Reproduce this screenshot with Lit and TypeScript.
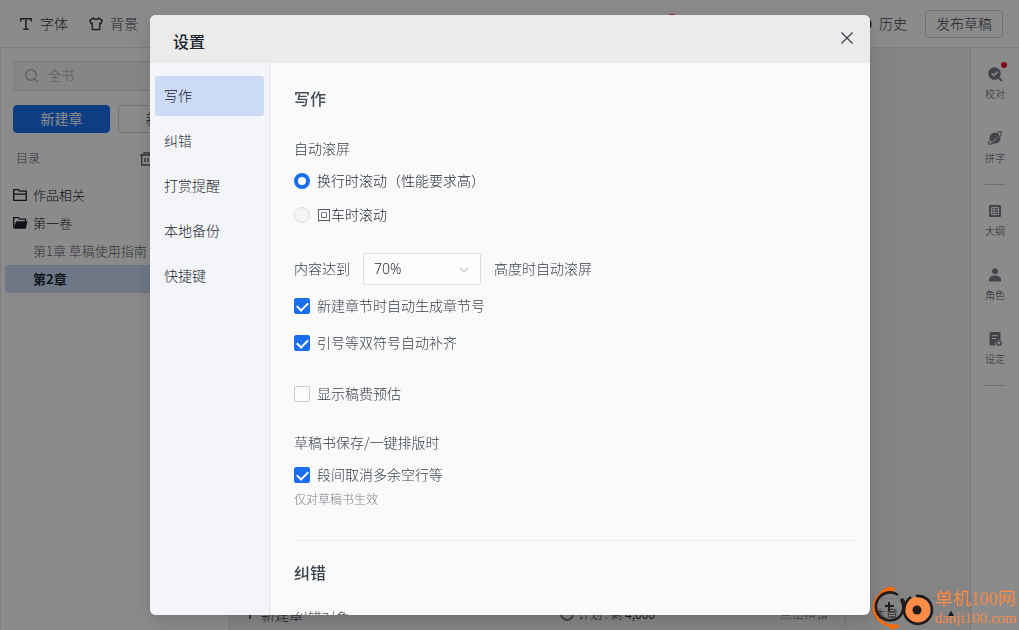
import { LitElement, html, css, svg } from "lit";
import { customElement, state } from "lit/decorators.js";
import { classMap } from "lit/directives/class-map.js";

const base = css`
  * { box-sizing: border-box; }
  :host {
    font-family: "Noto Sans CJK SC", sans-serif;
    font-size: 14px;
    font-weight: 300;
    line-height: 24px;
    color: #1d2530;
  }
  button, input, select { font: inherit; color: inherit; }
  button { border: 0; padding: 0; background: none; cursor: pointer; }
  svg { display: block; flex: none; }
`;

const icons = {
  font: svg`<path d="M1.700 4.500V1.700H12.300V4.500M7 1.700V12.300M4.300 12.300H9.700" fill="none" stroke="currentColor" stroke-width="1.500"/>`,
  shirt: svg`<path d="M4.500 1C5 3 9 3 9.500 1L13.300 3.300 12 6.500 10.800 6V12.500H3.200V6L2 6.500.7 3.300Z" fill="none" stroke="currentColor" stroke-width="1.500" stroke-linejoin="round"/>`,
  clock: svg`<g fill="none" stroke="currentColor" stroke-width="1.500"><circle cx="7" cy="7" r="6"/><path d="M7 3.500V7.500H10"/></g>`,
  search: svg`<g fill="none" stroke="currentColor" stroke-width="1.200"><circle cx="6" cy="6" r="5.300"/><path d="M9.800 9.800 12.500 12.500"/></g>`,
  trash: svg`<path d="M0 3H13M4 3V1H9V3M1.700 3V13H11.300V3M5 6V10M8 6V10" fill="none" stroke="currentColor" stroke-width="1.400"/>`,
  folder: svg`<path d="M.7 1.700H5.500L7 3.200H13.300V12.300H.7ZM.7 6.200H13.300" fill="none" stroke="currentColor" stroke-width="1.300" stroke-linejoin="round"/>`,
  open: svg`<path d="M.7 11V1.700H5.500L7 3.200H12.500V5.500" fill="none" stroke="currentColor" stroke-width="1.300"/><path d="M3.200 5.200H14.500L12.700 12.700H.3Z" fill="currentColor"/>`,
  check: svg`<circle cx="6.500" cy="6.500" r="6.300" fill="currentColor"/><path d="M11 11 14 14" stroke="currentColor" stroke-width="2.200"/><path d="M3.700 6.300 5.900 8.500 9.600 4.700" fill="none" stroke="#fff" stroke-width="1.600"/>`,
  planet: svg`<circle cx="7" cy="7" r="5.500" fill="currentColor"/><path d="M9.500 1.200C12 .2 13.600.3 13.500 1.500 13.200 4.500 9.500 9 5 12 2.500 13.500.6 13.700.5 12.400.5 11.500 1 10.500 1.500 9.800" fill="none" stroke="currentColor" stroke-width="1.200"/><path d="M2.800 11.500C6.500 10 10.500 6.500 12.100 3.300" fill="none" stroke="#fff" stroke-width=".9"/>`,
  outline: svg`<rect x="1" y="1" width="12" height="12" rx="1" fill="currentColor"/><path d="M3.500 3.500H10.500V10.500H3.500ZM3.500 5.800H10.500M3.500 8.200H10.500M6 3.500V10.500" fill="none" stroke="#fff" stroke-width=".9"/>`,
  person: svg`<circle cx="7" cy="3.200" r="2.900" fill="currentColor"/><path d="M1 13.500V12C1 9 3.500 7.500 7 7.500S13 9 13 12V13.500Z" fill="currentColor"/>`,
  config: svg`<path d="M3 0H11.500Q12.500 0 12.500 1V8A4 4 0 0 0 7.500 13.500H3Q1.500 13.500 1.500 12V1.500Q1.500 0 3 0Z" fill="currentColor"/><path d="M4 3.700H10M4 6.500H8" stroke="#fff"/><circle cx="11" cy="11" r="2.200" fill="none" stroke="currentColor" stroke-width="1.500"/>`,
  close: svg`<path d="M1.500 1.500 12.500 12.500M12.500 1.500 1.500 12.500" fill="none" stroke="currentColor" stroke-width="1.400"/>`,
  plus: svg`<path d="M7 2V12M2 7H12" stroke="currentColor" stroke-width="1.500"/>`,
  ring: svg`<circle cx="7" cy="7" r="6" fill="none" stroke="currentColor" stroke-width="2"/>`,
  up: svg`<path d="M4 9 7 3.500 10 9Z" fill="currentColor"/>`,
};

const icon = (name: keyof typeof icons) =>
  html`<svg width="14" height="14" viewBox="0 0 14 14" overflow="visible" aria-hidden="true">${icons[name]}</svg>`;

@customElement("draft-editor")
class DraftEditor extends LitElement {
  static styles = [base, css`
    :host { display: flex; flex-direction: column; min-height: 100vh; background: #f0f0f0; color: #2f343c; }
    .top { display: flex; align-items: center; height: 48px; padding: 0 16px 0 19px; background: #fdfdfd; border-bottom: 1px solid #e2e2e2; }
    .tool { display: flex; align-items: center; gap: 7px; margin-right: 21px; padding-bottom: 2px; color: #3a404a; }
    .tool svg { margin-top: 2px; }
    .middle { flex: 1; display: flex; justify-content: flex-end; padding-right: 186px; }
    .mark { position: relative; width: 14px; height: 14px; }
    .mark::after { content: ""; position: absolute; right: -3px; top: -3px; width: 6px; height: 6px; border-radius: 50%; background: #e8102d; }
    .publish { width: 78px; height: 28px; padding-bottom: 2px; border: 1px solid #cfcfcf; border-radius: 4px; color: #3a404a; }
    .history { margin-right: 18px; }
    .body { flex: 1; display: flex; }
    .side { width: 230px; padding: 13px 5px 0 4px; background: #fdfdfd; border: solid #e5e5e5; border-width: 0 1px; }
    .search { display: flex; align-items: center; gap: 9px; height: 30px; margin: 0 9px; padding: 0 10px; border: 1px solid #dcdede; border-radius: 3px; background: #f3f5f5; color: #a8acae; }
    .search input { width: 100%; min-width: 0; border: 0; padding: 0 0 2px; background: none; font-size: 13px; outline: 0; }
    .search input::placeholder { color: #9a9ea2; }
    .pair { display: flex; gap: 8px; margin: 14px 8px 0; }
    .pair button { width: 97px; height: 28px; padding-bottom: 2px; border: 1px solid #d4d4d4; border-radius: 4px; }
    .pair .main { background: #1a6fee; border-color: #1a6fee; color: #fff; font-weight: 400; }
    .dir { display: flex; align-items: center; justify-content: space-between; height: 24px; margin: 14px 70px 10px 11px; padding-bottom: 2px; font-size: 12px; color: #5c6168; }
    .dir svg { margin-top: 2px; }
    .row { display: flex; align-items: center; gap: 6px; height: 28px; padding: 0 0 0 8px; border-radius: 4px; font-size: 13px; white-space: nowrap; color: #1c222c; }
    .row.chapter { padding-left: 28px; color: #5c6168; }
    .row.current { background: #c8daf6; color: #222933; font-weight: 700; }
    .work { flex: 1; display: flex; flex-direction: column; justify-content: flex-end; }
    .foot { display: flex; align-items: center; height: 32px; padding: 0 12px 2px 13px; border-top: 1px solid #dcdcdc; font-size: 12px; }
    .add, .plan { display: flex; align-items: center; gap: 4px; }
    .add { font-size: 14px; }
    .plan { margin-left: auto; }
    .plan svg { color: #777c84; }
    .fix { margin-left: 125px; color: #6b6f76; }
    .total { margin-left: 17px; padding-left: 28px; border-left: 1px solid #d5d5d5; }
    .foot .last { margin-left: 46px; }
    .rail { width: 49px; padding-top: 10px; background: #fdfdfd; border-left: 1px solid #dadada; }
    .rail button { position: relative; display: flex; flex-direction: column; align-items: center; width: 100%; height: 64px; padding-top: 9px; font-size: 10px; line-height: 16px; gap: 5px; color: #4a5059; }
    .rail svg { color: #787d86; }
    .dot { position: absolute; right: 12px; top: 4px; width: 6px; height: 6px; border-radius: 50%; background: #e8102d; }
    .rail hr { width: 20px; margin: -2px auto 10px; border: 0; border-top: 1px solid #c8c8c8; }
  `];

  render() {
    return html`
      <header class="top">
        <button class="tool">${icon("font")}字体</button>
        <button class="tool">${icon("shirt")}背景</button>
        <div class="middle"><span class="mark"></span></div>
        <button class="tool history">${icon("clock")}历史</button>
        <button class="publish">发布草稿</button>
      </header>
      <div class="body">
        <aside class="side">
          <label class="search">${icon("search")}<input type="search" placeholder="全书" /></label>
          <div class="pair"><button class="main">新建章</button><button>新建卷</button></div>
          <div class="dir"><span>目录</span>${icon("trash")}</div>
          <div class="row">${icon("folder")}作品相关</div>
          <div class="row">${icon("open")}第一卷</div>
          <div class="row chapter">第1章 草稿使用指南</div>
          <div class="row chapter current">第2章</div>
        </aside>
        <main class="work">
          <footer class="foot">
            <button class="add">${icon("plus")}新建章</button>
            <span class="plan">${icon("ring")}<span>计划 : 剩 <b>4,000</b></span></span>
            <span class="fix">点击纠错</span>
            <span class="total">本章</span>
            <span class="last">${icon("up")}</span>
          </footer>
        </main>
        <nav class="rail">
          <button>${icon("check")}校对<i class="dot"></i></button>
          <button>${icon("planet")}拼字</button>
          <hr />
          <button>${icon("outline")}大纲</button>
          <button>${icon("person")}角色</button>
          <button>${icon("config")}设定</button>
          <hr />
        </nav>
      </div>`;
  }
}

@customElement("settings-dialog")
class SettingsDialog extends LitElement {
  static styles = [base, css`
    :host {
      display: flex; flex-direction: column; width: 720px; max-width: 100%; height: 600px; max-height: 100%;
      overflow: hidden; border-radius: 6px; background: #fafafa;
      box-shadow: 0 3px 6px -4px rgba(0,0,0,.12), 0 6px 16px rgba(0,0,0,.08), 0 9px 28px 8px rgba(0,0,0,.05);
    }
    .head { display: flex; flex: none; align-items: center; justify-content: space-between; height: 48px; padding: 4px 16px 0 23px; background: #ebebeb; }
    h2, h3, p { margin: 0; font-size: 16px; font-weight: 500; }
    .close { margin-bottom: 6px; color: #3f4752; }
    .panes { flex: 1; display: flex; min-height: 0; }
    .tabs { flex: none; display: flex; flex-direction: column; gap: 5px; width: 120px; padding: 13px 5px; background: #f4f5f8; border-right: 1px solid #e3e3e5; }
    .tab { height: 40px; padding: 0 0 2px 9px; border-radius: 3px; text-align: left; }
    .tab.on { background: #cbdaf6; }
    .content { flex: 1; overflow: hidden; padding: 23px 11px 0 24px; color: #353d47; }
    h3 { color: #454d57; }
    .title { margin: 26px 0 8px; font-size: 14px; font-weight: 300; }
    .title.save { margin-top: 25px; }
    .opt { display: flex; align-items: center; gap: 7px; }
    .opt input { appearance: none; flex: none; display: grid; place-items: center; width: 16px; height: 16px; margin: 2px 0 0; border: 1px solid #c9cacc; border-radius: 2px; background: #fcfcfc; }
    .opt input:checked { border-color: #1a6fee; background: #1a6fee; }
    .opt input[type="checkbox"]:checked::after { content: ""; width: 9px; height: 5px; margin-bottom: 2px; border: solid #fff; border-width: 0 0 2px 2px; transform: rotate(-45deg); }
    .opt.pick { color: #1d2530; }
    .opt.pick + .pick { margin-top: 10px; }
    .opt input[type="radio"] { border-radius: 50%; border-color: #dcdde0; background: #f4f5f7; }
    .opt input[type="radio"]:checked { border: 4px solid #1a6fee; background: #fff; }
    .limit { display: flex; align-items: center; gap: 13px; margin: 25px 0 8px; }
    .box { position: relative; display: flex; width: 118px; margin-top: 2px; }
    select { appearance: none; width: 100%; height: 32px; padding: 0 10px; border: 1px solid #dcdcde; border-radius: 2px; background: #fcfcfc; color: #262d37; font-family: "Noto Sans", sans-serif; }
    .box svg { position: absolute; right: 12px; top: 14px; color: #a2a5a9; pointer-events: none; }
    .second { margin-top: 13px; }
    .fee { margin-top: 27px; }
    .note { display: block; margin-top: 1px; font-size: 12px; color: #7d8187; }
    hr { margin: 29px 0 19px; border: 0; border-top: 1px solid #eee; }
    h3.next { color: #3a424c; }
    .title.cut { margin-top: 21px; }
  `];

  @state() private active = "写作";

  render() {
    return html`
      <header class="head"><h2>设置</h2><button class="close" aria-label="关闭">${icon("close")}</button></header>
      <div class="panes">
        <nav class="tabs">
          ${["写作", "纠错", "打赏提醒", "本地备份", "快捷键"].map((t) => html`
            <button class=${classMap({ tab: true, on: t === this.active })} @click=${() => (this.active = t)}>${t}</button>`)}
        </nav>
        <section class="content">
          <h3>写作</h3>
          <p class="title">自动滚屏</p>
          <label class="opt pick"><input type="radio" name="scroll" checked />换行时滚动（性能要求高）</label>
          <label class="opt pick"><input type="radio" name="scroll" />回车时滚动</label>
          <div class="limit">
            <label for="height">内容达到</label>
            <span class="box">
              <select id="height"><option>70%</option></select>
              <svg width="10" height="6" viewBox="0 0 10 6" aria-hidden="true"><path d="M1 .7 5 4.700 9 .7" fill="none" stroke="currentColor"/></svg>
            </span>
            <span>高度时自动滚屏</span>
          </div>
          <label class="opt"><input type="checkbox" checked />新建章节时自动生成章节号</label>
          <label class="opt second"><input type="checkbox" checked />引号等双符号自动补齐</label>
          <label class="opt fee"><input type="checkbox" />显示稿费预估</label>
          <p class="title save">草稿书保存/一键排版时</p>
          <label class="opt"><input type="checkbox" checked />段间取消多余空行等</label>
          <small class="note">仅对草稿书生效</small>
          <hr />
          <h3 class="next">纠错</h3>
          <p class="title cut">纠错对象</p>
        </section>
      </div>`;
  }
}

@customElement("site-mark")
class SiteMark extends LitElement {
  static styles = [base, css`
    :host { display: flex; align-items: center; color: #ff8a45; font-family: "Liberation Serif", "Noto Sans CJK SC", serif; font-weight: 400; }
    .name, .site { display: block; white-space: nowrap; }
    .name { font-size: 18px; line-height: 20px; }
    .site { font-size: 15px; line-height: 18px; }
  `];
  render() {
    return html`
      <svg width="64" height="44" viewBox="0 0 64 44" aria-hidden="true">
        <path d="M20 4C10 4 3 13 3 22S11 40 26 41" fill="none" stroke="#ff6a00" stroke-width="2.500"/>
        <path d="M10 6Q14 2 19 1L24 3 22 5ZM16 39 27 39 27 41 21 43Z" fill="#ff6a00" stroke="#ff6a00"/>
        <path d="M27 9A14 14 0 1 0 30 29C33 24 33 18 30 13" fill="none" stroke="#231b1b" stroke-width="2.600"/>
        <path d="M18 16V25M14 20H23" stroke="#231b1b" stroke-width="2"/>
        <path d="M31 13 35 19" stroke="#231b1b" stroke-width="2.600"/>
        <circle cx="46" cy="24" r="13" fill="#ff8c46"/>
        <path d="M40 11Q34 15 33 24A14 14 0 1 0 45 10" fill="none" stroke="#231b1b" stroke-width="2.600"/>
        <circle cx="46" cy="24" r="4.500" fill="#231b1b"/>
      </svg>
      <span><span class="name">单机100网</span><span class="site">danji100.com</span></span>`;
  }
}

@customElement("app-root")
class AppRoot extends LitElement {
  static styles = css`
    :host { display: block; position: relative; min-height: 100vh; }
    .mask { position: fixed; inset: 0; display: flex; align-items: center; justify-content: center; padding-left: 1px; background: rgba(0,0,0,.45); }
    .brand { position: fixed; right: 2px; bottom: 0; }
  `;
  render() {
    return html`
      <draft-editor></draft-editor>
      <div class="mask"><settings-dialog role="dialog"></settings-dialog></div>
      <site-mark class="brand"></site-mark>`;
  }
}
